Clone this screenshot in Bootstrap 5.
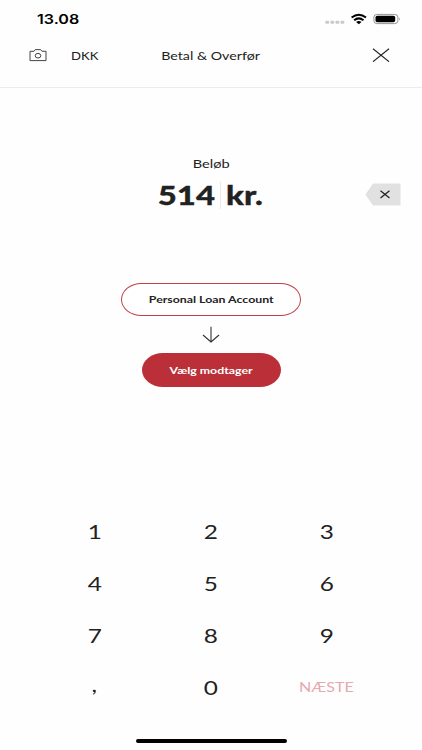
<!DOCTYPE html>
<html lang="da">
<head>
<meta charset="utf-8">
<meta name="viewport" content="width=device-width, initial-scale=1">
<title>Betal &amp; Overfør</title>
<link href="https://cdn.jsdelivr.net/npm/bootstrap@5.3.0/dist/css/bootstrap.min.css" rel="stylesheet">
<style>
  body { font-family: Lato, "Liberation Sans", sans-serif; color: #222; background: #fefefe; line-height: 1.2; }
  .screen { width: 422px; height: 750px; background: #fefefe; }
  .wide { display: inline-block; white-space: nowrap; transform: scaleX(1.218); }
  .wide-start { transform-origin: left center; }
  svg { display: block; flex: none; }
  .statusbar { height: 38px; padding: 0 21px 0 37px; }
  .clock { font: 600 13.2px/1 Inter, sans-serif; color: #000; padding-top: 2px; }
  .topbar { height: 50px; padding: 0 32px 15px 29px; border-bottom: 1px solid #ececec; display: grid; grid-template-columns: 41.5px 91.5px 98px 1fr; align-items: center; font-size: 11.7px; }
  .bar-text { padding-top: 1px; line-height: 14px; }
  .bar-title { padding: 0 0 1px; }
  .currency { font-size: 10.8px; }
  .amount-block { height: 195px; padding-top: 68px; }
  .label-text { font-size: 12px; line-height: 15px; }
  .amount-row { height: 34px; margin-top: 7px; display: grid; grid-template-columns: 215px 1px 1fr; column-gap: 5px; position: relative; align-items: center; }
  .amount-text { font-size: 27px; font-weight: 900; line-height: 34px; -webkit-text-stroke: .3px #222; }
  .amount-left { transform-origin: right center; }
  .caret { height: 27px; background: #e9e9e9; }
  .erase { position: absolute; right: 21px; top: 5px; }
  .pill { border-radius: 21px / 17px; font-size: 10.15px; font-weight: 700; display: flex; align-items: center; justify-content: center; padding: 0 0 1px; line-height: 1.2; }
  .pill-from { width: 180px; height: 33px; border: 1.2px solid #c0404a; color: #222; background: #fff; }
  .pill-to { width: 139px; height: 34px; background: #bb3038; color: #fff; border: 0; padding: 0; }
  .keypad { margin-top: 119px; padding: 0 37px; }
  .key { height: 51.8px; display: flex; align-items: center; justify-content: center; font-size: 20px; padding-bottom: 1px; }
  .key-next { padding: 1px 1px 0 0; }
  .next { font-size: 13.2px; color: #e5a9ae; }
  .key-comma { padding: 0 2px 6px 0; }
  .homebar { width: 151px; height: 4px; border-radius: 2px; background: #000; margin-top: 26px; }
</style>
<script src="https://cdn.jsdelivr.net/npm/bootstrap@5.3.0/dist/js/bootstrap.bundle.min.js"></script>
</head>
<body>
<main class="screen d-flex flex-column overflow-hidden">
  <div class="statusbar d-flex justify-content-between align-items-center">
    <span class="clock wide wide-start">13.08</span>
    <svg width="76" height="14" viewBox="0 0 76 14">
      <g fill="#c9c9c9"><rect x=".3" y="8.8" width="3.8" height="3" rx="1"/><rect x="5.4" y="8.8" width="3.8" height="3" rx="1"/><rect x="10.5" y="8.8" width="3.8" height="3" rx="1"/><rect x="15.5" y="8.8" width="3.8" height="3" rx="1"/></g>
      <g fill="none" stroke="#000" stroke-width="2"><path d="M26.6 5.5Q33.8-.1 41 5.5"/><path d="M29.1 8.2Q33.8 4.6 38.5 8.2"/></g>
      <path d="M31.1 10Q33.8 8 36.5 10L33.8 12.3Z"/>
      <rect x="48.9" y="2.4" width="24" height="9.2" rx="3.3" ry="2.7" fill="none" stroke="#888" stroke-width=".9"/>
      <rect x="50.5" y="3.8" width="19.7" height="6.4" rx="1.8"/><path d="M74 5.5Q75.5 7 74 8.5Z" fill="#777"/>
    </svg>
  </div>
  <header class="topbar">
    <svg width="18" height="13" viewBox="0 0 18 13" fill="none" stroke="#444" stroke-width="1"><path d="M1 2.3H5L6.3.6H11.7L13 2.3H17V11.6H1Z"/><ellipse cx="9" cy="6.7" rx="2.8" ry="2.3"/></svg>
    <span class="bar-text"><span class="wide wide-start currency">DKK</span></span>
    <span class="bar-text bar-title text-center"><span class="wide">Betal &amp; Overfør</span></span>
    <svg class="ms-auto" width="18" height="14" viewBox="0 0 18 14" fill="none" stroke="#222" stroke-width="1.1"><path d="M1 .7L17 13.7M17 .7L1 13.7"/></svg>
  </header>
  <section class="amount-block">
    <div class="label-text text-center"><span class="wide">Beløb</span></div>
    <div class="amount-row">
      <span class="text-end"><span class="amount-text wide amount-left">514</span></span>
      <span class="caret"></span>
      <span><span class="amount-text wide wide-start">kr.</span></span>
      <svg class="erase" width="36" height="23" viewBox="0 0 36 23"><path d="M.5 11.5L8 .5H35.5V22.5H8Z" fill="#e1e1e1"/><path d="M15.5 7.8L24.5 15M24.5 7.8L15.5 15" stroke="#222" stroke-width="1.3"/></svg>
    </div>
  </section>
  <section class="d-flex flex-column align-items-center">
    <button class="btn pill pill-from"><span class="wide">Personal Loan Account</span></button>
    <svg class="my-2" width="20" height="21" viewBox="0 0 20 21" fill="none" stroke="#333" stroke-width="1.1"><path d="M10 2.7V18M2 11L10 18L18 11"/></svg>
    <button class="btn pill pill-to"><span class="wide">Vælg modtager</span></button>
  </section>
  <section class="keypad">
    <div class="row row-cols-3 g-0">
      <div class="col key"><span class="wide">1</span></div><div class="col key"><span class="wide">2</span></div><div class="col key"><span class="wide">3</span></div>
      <div class="col key"><span class="wide">4</span></div><div class="col key"><span class="wide">5</span></div><div class="col key"><span class="wide">6</span></div>
      <div class="col key"><span class="wide">7</span></div><div class="col key"><span class="wide">8</span></div><div class="col key"><span class="wide">9</span></div>
      <div class="col key key-comma"><span class="wide">,</span></div><div class="col key"><span class="wide">0</span></div><div class="col key key-next"><span class="wide next">NÆSTE</span></div>
    </div>
  </section>
  <div class="homebar mx-auto"></div>
</main>
</body>
</html>
